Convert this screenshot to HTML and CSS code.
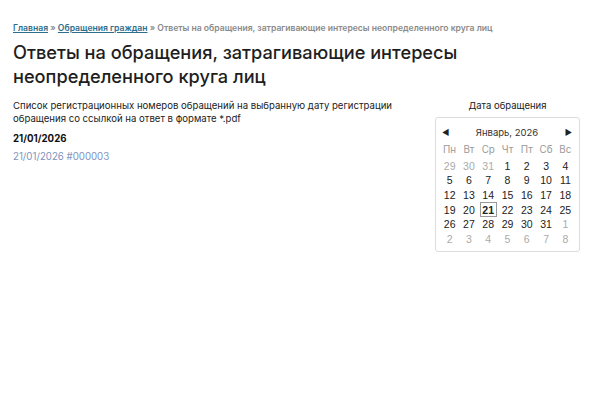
FILE: index.html
```html
<!DOCTYPE html>
<html lang="ru">
<head>
<meta charset="utf-8">
<link rel="stylesheet" href="styles.css">
</head>
<body>
<div class="page">
  <nav class="crumbs"><a href="#">Главная</a> » <a href="#">Обращения граждан</a> » Ответы на обращения, затрагивающие интересы неопределенного круга лиц</nav>
  <h1 class="title">Ответы на обращения, затрагивающие интересы неопределенного круга лиц</h1>
  <div class="content">
    <div class="main">
      <p class="desc">Список регистрационных номеров обращений на выбранную дату регистрации обращения со ссылкой на ответ в формате *.pdf</p>
      <div class="date">21/01/2026</div>
      <a class="item" href="#">21/01/2026 #000003</a>
    </div>
    <aside class="side">
      <div class="side-title">Дата обращения</div>
      <div class="cal">
        <div class="cal-head"><span class="arrow">◀</span><span class="month">Январь, 2026</span><span class="arrow">▶</span></div>
        <div class="grid">
          <span class="dn">Пн</span><span class="dn">Вт</span><span class="dn">Ср</span><span class="dn">Чт</span><span class="dn">Пт</span><span class="dn">Сб</span><span class="dn">Вс</span>
          <span class="o">29</span><span class="o">30</span><span class="o">31</span><span>1</span><span>2</span><span>3</span><span>4</span>
          <span>5</span><span>6</span><span>7</span><span>8</span><span>9</span><span>10</span><span>11</span>
          <span>12</span><span>13</span><span>14</span><span>15</span><span>16</span><span>17</span><span>18</span>
          <span>19</span><span>20</span><span class="sel">21</span><span>22</span><span>23</span><span>24</span><span>25</span>
          <span>26</span><span>27</span><span>28</span><span>29</span><span>30</span><span>31</span><span class="o">1</span>
          <span class="o">2</span><span class="o">3</span><span class="o">4</span><span class="o">5</span><span class="o">6</span><span class="o">7</span><span class="o">8</span>
        </div>
      </div>
    </aside>
  </div>
</div>
</body>
</html>
```

FILE: styles.css
```css
html, body { margin: 0; padding: 0; background: #fff; }
body { font-family: Inter, "Noto Sans", sans-serif; color: #222; }
.page { padding: 22px 13px 0 13px; }
.crumbs { font-size: 8.6px; font-weight: 600; color: #8a8a8a; line-height: 12px; }
.crumbs a { color: #2d6e8e; text-decoration: underline; }
.title { margin: 6px 0 0; font-size: 18.2px; font-weight: 500; line-height: 24px; color: #1e1e1e; }
.content { display: flex; justify-content: space-between; margin-top: 12px; }
.main { width: 400px; }
.desc { margin: 0; font-size: 9.6px; line-height: 12.5px; color: #222; }
.date { margin-top: 8px; font-size: 9.7px; font-weight: 700; color: #111; line-height: 12px; }
.item { display: block; margin-top: 6px; font-size: 9.7px; color: #7e93c0; text-decoration: none; line-height: 12px; }
.side { width: 145px; margin-right: 7px; display: flex; flex-direction: column; align-items: center; }
.side-title { font-size: 9.5px; line-height: 12px; color: #222; }
.cal { margin-top: 5px; width: 145px; border: 1px solid #ddd; border-radius: 3px; padding: 7px 4px 5px; box-sizing: border-box; font-family: "Liberation Sans", Arial, sans-serif; }
.cal-head { display: flex; justify-content: space-between; align-items: center; padding: 0 3px 0 2px; height: 14px; font-family: Inter, sans-serif; font-size: 9.5px; color: #333; }
.arrow { font-size: 8px; color: #222; }
.grid { display: grid; grid-template-columns: repeat(7, 1fr); grid-template-rows: 18px; grid-auto-rows: 14.6px; margin-top: 1.5px; }
.grid span { display: flex; align-items: center; justify-content: center; font-size: 10.5px; color: #222; }
.grid .dn { font-family: Inter, sans-serif; font-size: 9.8px; color: #9a9a9a; }
.grid .o { color: #aaa; }
.grid .sel { font-weight: 700; border: 1px solid #999; margin: 0 1px; }
```
